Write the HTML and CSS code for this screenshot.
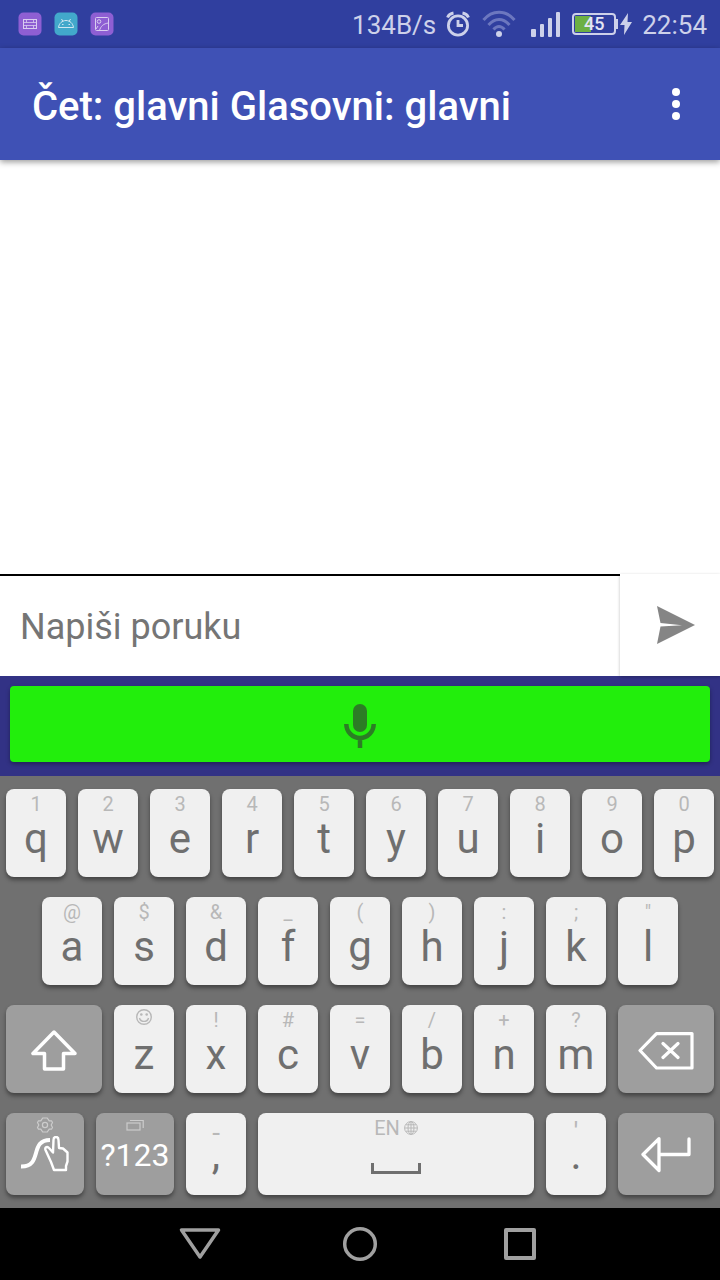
FILE: index.html
```html
<!DOCTYPE html>
<html lang="sr">
<head>
<meta charset="utf-8">
<meta name="viewport" content="width=device-width, initial-scale=1">
<title>Čet: glavni Glasovni: glavni</title>
<link rel="stylesheet" href="styles.css">
</head>
<body>
<div class="screen">
  <div class="status-bar">
    <div class="notifications">
      <svg width="24" height="24" viewBox="0 0 24 24" fill="none" stroke="#d9cdf0"><rect x=".5" y=".5" width="23" height="23" rx="5" fill="#8e5fd3" stroke="none"/><rect x="5.500" y="7.500" width="13" height="9"/><path d="M5.500 10.500h13M5.500 13.500h13M8.500 7.500v3M15.500 7.500v3M8.500 13.500v3M15.500 13.500v3" stroke-opacity=".8"/></svg>
      <svg width="24" height="24" viewBox="0 0 24 24" fill="none" stroke="#cfe6f2"><rect x=".5" y=".5" width="23" height="23" rx="5" fill="#42a8cb" stroke="none"/><path d="M4.500 15.500c.5-4 3.500-7 7.500-7s7 3 7.500 7zM7.500 7l1.500 2.500M16.500 7L15 9.500M8 12.500h1.500M14.500 12.500H16"/></svg>
      <svg width="24" height="24" viewBox="0 0 24 24" fill="none" stroke="#d9cdf0"><rect x=".5" y=".5" width="23" height="23" rx="5" fill="#8e5fd3" stroke="none"/><rect x="5.500" y="5.500" width="13" height="13" rx="1"/><circle cx="9" cy="9.500" r="1.800"/><path d="M9.500 18.500c1-4 4-7 9-7.500M8 14l-2 3"/></svg>
    </div>
    <div class="indicators">
      <span class="speed">134B/s</span>
      <svg class="alarm" width="24" height="28" viewBox="0 0 24 28" fill="none" stroke="#cdd1ea" stroke-width="2.800"><circle cx="12" cy="15.500" r="9.600"/><path d="M12 10v5.500h5M1.500 7.500C2.500 5 4.500 3.500 7.500 3M22.500 7.500C21.500 5 19.500 3.500 16.500 3"/></svg>
      <svg class="wifi" width="34" height="28" viewBox="0 0 34 28" fill="none" stroke="#6c77bf" stroke-width="3"><path d="M1.500 10C10-.5 24-.5 32.500 10M6.500 15C13 7.500 21 7.500 27.500 15M11.500 19.500C15 15.500 19 15.500 22.500 19.500"/><circle cx="17" cy="24" r="3" fill="#cdd1ea" stroke="none"/></svg>
      <svg class="signal" width="30" height="28" viewBox="0 0 30 28" fill="#cdd1ea"><rect y="19" width="5" height="8" rx="1"/><rect x="9" y="14" width="4" height="13" rx="1"/><rect x="17" y="8" width="4" height="19" rx="1"/><rect x="25" y="2" width="4" height="25" rx="1"/></svg>
      <span class="battery"><span class="battery-level">45</span></span>
      <svg width="12" height="24" viewBox="0 0 12 24" fill="#cdd1ea"><path d="M8 1L0 13h4.500L4 23l8-13H7.500z"/></svg>
      <time>22:54</time>
    </div>
  </div>

  <header class="app-bar">
    <h1>Čet: glavni Glasovni: glavni</h1>
    <button class="menu" aria-label="Meni"><svg width="10" height="34" viewBox="0 0 10 34" fill="#fff"><circle cx="5" cy="5" r="4"/><circle cx="5" cy="17" r="4"/><circle cx="5" cy="29" r="4"/></svg></button>
  </header>

  <main class="messages"></main>

  <form class="composer">
    <input type="text" placeholder="Napiši poruku" aria-label="Napiši poruku">
    <button type="button" class="send" aria-label="Pošalji"><svg width="38" height="38" viewBox="0 0 38 38"><path fill="#858585" d="M0 0l38 19L0 38l3.500-17.500L25 19.200 3.500 17z"/></svg></button>
  </form>

  <div class="voice-bar">
    <button class="talk" aria-label="Govori"><svg width="32" height="48" viewBox="0 0 32 48" fill="none" stroke="#2c7d25" stroke-width="4.500"><rect x="9" y="4" width="14" height="28" rx="7" fill="#2c7d25" stroke="none"/><path d="M2.300 24a13.700 14 0 0 0 27.400 0M16 38v10"/></svg></button>
  </div>

  <section class="keyboard" aria-label="Tastatura">
    <div class="row">
      <button class="key"><span class="hint">1</span><span class="main">q</span></button>
      <button class="key"><span class="hint">2</span><span class="main">w</span></button>
      <button class="key"><span class="hint">3</span><span class="main">e</span></button>
      <button class="key"><span class="hint">4</span><span class="main">r</span></button>
      <button class="key"><span class="hint">5</span><span class="main">t</span></button>
      <button class="key"><span class="hint">6</span><span class="main">y</span></button>
      <button class="key"><span class="hint">7</span><span class="main">u</span></button>
      <button class="key"><span class="hint">8</span><span class="main">i</span></button>
      <button class="key"><span class="hint">9</span><span class="main">o</span></button>
      <button class="key"><span class="hint">0</span><span class="main">p</span></button>
    </div>
    <div class="row row-home">
      <button class="key"><span class="hint">@</span><span class="main">a</span></button>
      <button class="key"><span class="hint">$</span><span class="main">s</span></button>
      <button class="key"><span class="hint">&amp;</span><span class="main">d</span></button>
      <button class="key"><span class="hint">_</span><span class="main">f</span></button>
      <button class="key"><span class="hint">(</span><span class="main">g</span></button>
      <button class="key"><span class="hint">)</span><span class="main">h</span></button>
      <button class="key"><span class="hint">:</span><span class="main">j</span></button>
      <button class="key"><span class="hint">;</span><span class="main">k</span></button>
      <button class="key"><span class="hint">"</span><span class="main">l</span></button>
    </div>
    <div class="row">
      <button class="key special wide" aria-label="Shift"><span class="hint"></span><span class="main"><svg width="48" height="44" viewBox="0 0 48 44" fill="none" stroke="#fff" stroke-width="3.500" stroke-linejoin="round"><path d="M24 2L3 23.500h11.500V39h19V23.500H45z"/></svg></span></button>
      <button class="key"><span class="hint hint-icon"><svg width="18" height="18" viewBox="0 0 18 18" fill="none" stroke="#b8b8b8" stroke-width="1.400"><circle cx="9" cy="9" r="7.300"/><path d="M4.500 10c1 4.500 8 4.500 9 0"/><circle cx="6.300" cy="6.500" r="1.300" fill="#b8b8b8" stroke="none"/><circle cx="11.700" cy="6.500" r="1.300" fill="#b8b8b8" stroke="none"/></svg></span><span class="main">z</span></button>
      <button class="key"><span class="hint">!</span><span class="main">x</span></button>
      <button class="key"><span class="hint">#</span><span class="main">c</span></button>
      <button class="key"><span class="hint">=</span><span class="main">v</span></button>
      <button class="key"><span class="hint">/</span><span class="main">b</span></button>
      <button class="key"><span class="hint">+</span><span class="main">n</span></button>
      <button class="key"><span class="hint">?</span><span class="main">m</span></button>
      <button class="key special wide" aria-label="Backspace"><span class="hint"></span><span class="main"><svg width="56" height="40" viewBox="0 0 56 40" fill="none" stroke="#fff" stroke-width="3.200" stroke-linejoin="round" stroke-linecap="round"><path d="M2 18.500L18.500 1.600H54v34.400H18.500zM25 11.500l15 14M40 11.500L25 25.500"/></svg></span></button>
    </div>
    <div class="row row-bottom">
      <button class="key special medium" aria-label="Swype"><span class="hint hint-icon"><svg width="18" height="18" viewBox="0 0 18 18" fill="none" stroke="#ccc" stroke-width="1.200" stroke-linejoin="round"><path d="M1.500 6.500l1.300 2.500-1.300 2.500 1 1.700 2.300-.1 1.900 2.900h4.600l1.900-2.900 2.300.1 1-1.700L15.200 9l1.300-2.500-1-1.700-2.300.1L11.300 2H6.700L4.800 4.900l-2.300-.1z"/><circle cx="9" cy="9" r="2.600"/></svg></span><span class="main"><svg width="50" height="38" viewBox="0 0 50 38" fill="none" stroke="#fff" stroke-linecap="round" stroke-linejoin="round"><path d="M1 30.500C23 31 9 4 30 4" stroke-width="4" stroke-linecap="butt"/><path d="M34 34l-3-8-5.500-12c-1-3 2-4 3.500-2l4 4.500.5-12.500c0-4 5-4 5 0l.5 8 4 .5 4.500 4v9L46 30v4z" fill="#9e9e9e" stroke-width="2.400"/></svg></span></button>
      <button class="key special medium"><span class="hint hint-icon"><svg width="18" height="18" viewBox="0 0 18 18" fill="none" stroke="#ccc" stroke-width="1.200"><rect x="1" y="7" width="13" height="7"/><path d="M4 4.500h13.200V12"/></svg></span><span class="main main-text">?123</span></button>
      <button class="key"><span class="hint hint-large">-</span><span class="main">,</span></button>
      <button class="key space" aria-label="Razmak"><span class="hint">EN <svg width="14" height="14" viewBox="0 0 14 14" fill="none" stroke="#b8b8b8"><circle cx="7" cy="7" r="6.400"/><ellipse cx="7" cy="7" rx="3" ry="6.400"/><path d="M7 1v12M1 7h12M2 3.800h10M2 10.200h10"/></svg></span><span class="main"><svg width="50" height="40" viewBox="0 0 50 40" fill="none" stroke="#6f6f6f" stroke-width="3"><path d="M1.500 28v9.500h47V28"/></svg></span></button>
      <button class="key"><span class="hint hint-large">'</span><span class="main">.</span></button>
      <button class="key special wide" aria-label="Enter"><span class="hint"></span><span class="main"><svg width="50" height="36" viewBox="0 0 50 36" fill="none" stroke="#fff" stroke-width="3.300" stroke-linejoin="round" stroke-linecap="round"><path d="M18 1.700L2 17.500l16 16zM18 17.500h30V2"/></svg></span></button>
    </div>
  </section>

  <nav class="nav-bar">
    <button aria-label="Nazad"><svg width="42" height="34" viewBox="0 0 42 34" fill="none" stroke="#a0a0a0" stroke-width="3.500" stroke-linejoin="round"><path d="M2.500 3h37L21 30z"/></svg></button>
    <button aria-label="Početna"><svg width="36" height="36" viewBox="0 0 36 36" fill="none" stroke="#a0a0a0" stroke-width="3.500"><circle cx="18" cy="18" r="15.300"/></svg></button>
    <button aria-label="Nedavno"><svg width="32" height="32" viewBox="0 0 32 32" fill="none" stroke="#a0a0a0" stroke-width="4" stroke-linejoin="round"><rect x="2" y="2" width="28" height="28"/></svg></button>
  </nav>
</div>
</body>
</html>
```
FILE: styles.css
```css
* { box-sizing: border-box; }

body {
  margin: 0;
  font-family: Roboto, "Noto Sans", sans-serif;
  background: #fff;
}

button {
  border: 0;
  padding: 0;
  background: none;
  font: inherit;
  color: inherit;
}

svg { display: block; flex: none; }

.screen {
  display: flex;
  flex-direction: column;
  min-height: 100vh;
}

/* System status bar */
.status-bar {
  display: flex;
  align-items: center;
  justify-content: space-between;
  height: 48px;
  padding: 0 13px 0 18px;
  background: #303f9f;
  color: #cdd1ea;
  font-size: 26px;
}

.notifications { display: flex; gap: 12px; }
.indicators { display: flex; align-items: center; line-height: 48px; }
.speed { padding-top: 2px; }
.indicators time { margin-left: 10px; padding-top: 2px; }
.alarm { margin-left: 10px; }
.wifi { margin-left: 12px; }
.signal { margin-left: 15px; }

.battery {
  position: relative;
  width: 44px;
  height: 22px;
  margin: 0 4px 0 11px;
  padding: 1px;
  border: 2px solid #cdd1ea;
  border-radius: 4px;
}

.battery::after {
  content: "";
  position: absolute;
  top: 4px;
  right: -4px;
  width: 2px;
  height: 10px;
  background: #cdd1ea;
}

.battery-level {
  display: block;
  height: 16px;
  background: linear-gradient(to right, #6cb043 43%, transparent 43%);
  color: #e4e6f4;
  font-size: 18px;
  font-weight: 500;
  line-height: 16px;
  text-align: center;
}

/* App bar */
.app-bar {
  display: flex;
  align-items: center;
  justify-content: space-between;
  height: 112px;
  padding: 0 24px 0 32px;
  background: #3f51b5;
  color: #fff;
  box-shadow: 0 2px 6px rgba(0, 0, 0, .4);
}

.app-bar h1 {
  margin: 0;
  padding-top: 6px;
  font-size: 40px;
  font-weight: 500;
  line-height: 48px;
}

.menu { display: flex; justify-content: center; width: 40px; }

.messages { flex: 1; }

/* Message composer */
.composer { display: flex; height: 102px; }

.composer input {
  flex: 1;
  min-width: 0;
  padding: 2px 20px 0;
  border: 0;
  border-top: 2px solid #000;
  background: #fff;
  font: 36px Roboto, "Noto Sans", sans-serif;
  color: #222;
  outline: none;
}

.composer input::placeholder { color: #757575; opacity: 1; }

.send {
  position: relative;
  z-index: 1;
  display: flex;
  align-items: center;
  justify-content: center;
  width: 100px;
  padding-left: 12px;
  background: #fff;
  box-shadow: 0 1px 3px rgba(0, 0, 0, .25);
}

/* Push to talk */
.voice-bar { padding: 10px 10px 14px; background: #323285; }

.talk {
  display: flex;
  align-items: center;
  justify-content: center;
  width: 100%;
  height: 76px;
  border-radius: 4px;
  background: #22ee0c;
  box-shadow: 0 2px 4px rgba(0, 0, 0, .35);
}

/* Keyboard */
.keyboard {
  display: grid;
  gap: 20px;
  padding: 13px 0;
  background: #707070;
  color: #6f6f6f;
}

.row {
  display: grid;
  grid-template-columns: repeat(40, 1fr);
  grid-auto-rows: 88px;
}

.row-bottom { grid-auto-rows: 82px; }
.row-home .key:first-child { grid-column: 3 / span 4; }

.key {
  grid-column: span 4;
  display: flex;
  flex-direction: column;
  margin: 0 6px;
  padding-top: 3px;
  border-radius: 8px;
  background: #f0f0f0;
  box-shadow: 0 3px 4px rgba(0, 0, 0, .4);
}

.medium { grid-column: span 5; }
.wide { grid-column: span 6; }
.space { grid-column: span 16; }
.special { background: #9e9e9e; color: #fff; }

.hint {
  display: flex;
  align-items: center;
  justify-content: center;
  gap: 4px;
  height: 24px;
  margin-bottom: 1px;
  font-size: 20px;
  line-height: 24px;
  color: #b8b8b8;
}

.hint-icon { align-items: flex-start; }
.hint-large { padding-top: 10px; font-size: 28px; }

.main {
  display: flex;
  align-items: center;
  justify-content: center;
  height: 44px;
  font-size: 42px;
  line-height: 44px;
}

.special .main { height: 38px; }
.row-bottom .main { height: 28px; }
.row-bottom .main-text { font-size: 32px; }

/* System navigation */
.nav-bar {
  display: grid;
  grid-template-columns: repeat(3, 1fr);
  height: 72px;
  padding: 0 calc(100% / 6);
  background: #000;
}

.nav-bar button { display: flex; align-items: center; justify-content: center; }
```
